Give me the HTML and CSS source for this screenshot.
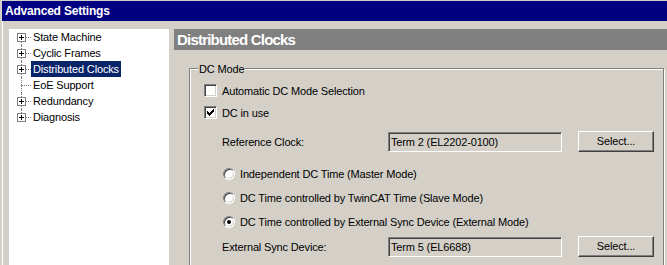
FILE: index.html
```html
<!DOCTYPE html>
<html lang="en">
<head>
  <meta charset="UTF-8" />
  <title>Advanced Settings</title>
  <link rel="stylesheet" href="styles.css">
</head>
<body>
  <div class="window">
    <div class="titlebar">Advanced Settings</div>
    <div class="main">
      <!-- Settings tree -->
      <ul class="tree">
        <li><span class="expander"></span><span class="hline"></span><span class="label">State Machine</span></li>
        <li><span class="expander"></span><span class="hline"></span><span class="label">Cyclic Frames</span></li>
        <li><span class="expander"></span><span class="hline"></span><span class="label selected">Distributed Clocks</span></li>
        <li><span class="hline long"></span><span class="label">EoE Support</span></li>
        <li><span class="expander"></span><span class="hline"></span><span class="label">Redundancy</span></li>
        <li><span class="expander"></span><span class="hline"></span><span class="label">Diagnosis</span></li>
      </ul>

      <!-- Page content -->
      <div class="pane">
        <div class="pane-header">Distributed Clocks</div>
        <div class="groupbox">
          <span class="group-title">DC Mode</span>

          <div class="check-row">
            <span class="checkbox"></span>
            <span>Automatic DC Mode Selection</span>
          </div>
          <div class="check-row second">
            <span class="checkbox">
              <svg width="7" height="7" viewBox="0 0 7 7" shape-rendering="crispEdges">
                <rect x="0" y="2" width="1" height="3" />
                <rect x="1" y="3" width="1" height="3" />
                <rect x="2" y="4" width="1" height="3" />
                <rect x="3" y="3" width="1" height="3" />
                <rect x="4" y="2" width="1" height="3" />
                <rect x="5" y="1" width="1" height="3" />
                <rect x="6" y="0" width="1" height="3" />
              </svg>
            </span>
            <span>DC in use</span>
          </div>

          <div class="field-row ref">
            <span class="field-label">Reference Clock:</span>
            <span class="textbox">Term 2 (EL2202-0100)</span>
            <span class="button">Select...</span>
          </div>

          <div class="radio-row first">
            <span class="radio"></span>
            <span>Independent DC Time (Master Mode)</span>
          </div>
          <div class="radio-row">
            <span class="radio"></span>
            <span>DC Time controlled by TwinCAT Time (Slave Mode)</span>
          </div>
          <div class="radio-row">
            <span class="radio checked"></span>
            <span>DC Time controlled by External Sync Device (External Mode)</span>
          </div>

          <div class="field-row ext">
            <span class="field-label">External Sync Device:</span>
            <span class="textbox">Term 5 (EL6688)</span>
            <span class="button">Select...</span>
          </div>
        </div>
      </div>
    </div>
  </div>
</body>
</html>
```

FILE: styles.css
```css
/* Base */
* {
  box-sizing: border-box;
}
body {
  margin: 0;
  height: 265px;
  overflow: hidden;
  background: #d4d0c8;
  font-family: 'Liberation Sans', Arial, sans-serif;
  font-size: 11px;
  letter-spacing: -0.15px;
  color: #000;
}
.window {
  margin-left: 2px;
  padding-top: 1px;
  height: 100%;
}
/* Title bar */
.titlebar {
  height: 20px;
  line-height: 20px;
  padding-left: 3px;
  background: #000080;
  color: #fff;
  font-weight: bold;
  font-size: 12px;
  letter-spacing: -0.2px;
}
.main {
  display: flex;
  gap: 5px;
  height: 244px;
  padding: 8px 0 0 6px;
  border-left: 1px solid #fff;
}
/* Tree */
.tree {
  list-style: none;
  margin: 0;
  padding: 0;
  width: 160px;
  background: #fff;
}
.tree li {
  position: relative;
  display: flex;
  align-items: center;
  height: 16px;
  padding-left: 8px;
}
.tree li::before {
  content: '';
  position: absolute;
  left: 12px;
  top: 0;
  bottom: 0;
  border-left: 1px dotted #808080;
}
.tree li:first-child::before {
  top: 8px;
}
.tree li:last-child::before {
  bottom: 8px;
}
.expander {
  position: relative;
  z-index: 1;
  width: 9px;
  height: 9px;
  border: 1px solid #808080;
  background: #fff;
}
.expander::before {
  content: '';
  position: absolute;
  left: 1px;
  top: 3px;
  width: 5px;
  height: 1px;
  background: #000;
}
.expander::after {
  content: '';
  position: absolute;
  left: 3px;
  top: 1px;
  width: 1px;
  height: 5px;
  background: #000;
}
.hline {
  width: 5px;
  border-top: 1px dotted #808080;
}
.hline.long {
  width: 10px;
  margin-left: 4px;
}
.label {
  height: 16px;
  line-height: 16px;
  padding: 0 2px;
}
.label.selected {
  background: #0a246a;
  color: #fff;
}
/* Right pane */
.pane {
  flex: 1;
}
.pane-header {
  height: 21px;
  line-height: 21px;
  padding-left: 3px;
  background: #808080;
  color: #fff;
  font-family: 'Liberation Sans Narrow', 'Arial Narrow', 'Liberation Sans', sans-serif;
  font-weight: bold;
  font-size: 15px;
  letter-spacing: -0.8px;
}
.groupbox {
  position: relative;
  height: 198px;
  margin: 18px 3px 0 15px;
  padding: 15px 0 0 14px;
  border: 1px solid #808080;
  box-shadow: inset 1px 1px #fff, 1px 1px #fff;
}
.group-title {
  position: absolute;
  top: -6px;
  left: 8px;
  padding: 0 1px;
  line-height: 13px;
  background: #d4d0c8;
}
/* Check boxes and radios */
.check-row,
.radio-row {
  display: flex;
  align-items: center;
  gap: 5px;
  height: 13px;
}
.check-row.second {
  margin-top: 9px;
}
.checkbox {
  display: flex;
  align-items: center;
  justify-content: center;
  width: 13px;
  height: 13px;
  background: #fff;
  border: 1px solid;
  border-color: #808080 #fff #fff #808080;
  box-shadow: inset 1px 1px #404040, inset -1px -1px #d4d0c8;
}
.radio-row {
  margin-left: 19px;
  margin-top: 11px;
}
.radio-row.first {
  margin-top: 15px;
}
.radio {
  position: relative;
  width: 12px;
  height: 12px;
  border-radius: 50%;
  background: #fff;
  border: 1px solid;
  border-color: #808080 #fff #fff #808080;
  box-shadow: inset 1px 1px #404040, inset -1px -1px #d4d0c8;
}
.radio.checked::after {
  content: '';
  position: absolute;
  left: 3px;
  top: 3px;
  width: 4px;
  height: 4px;
  border-radius: 50%;
  background: #000;
}
/* Field rows */
.field-row {
  display: flex;
  align-items: center;
  height: 21px;
  margin-left: 18px;
}
.field-row.ref {
  margin-top: 12px;
}
.field-row.ext {
  margin-top: 8px;
}
.field-label {
  width: 166px;
}
.textbox {
  width: 174px;
  height: 20px;
  line-height: 18px;
  padding-left: 2px;
  border: 1px solid;
  border-color: #808080 #fff #fff #808080;
  box-shadow: inset 1px 1px #404040, inset -1px -1px #d4d0c8;
}
.button {
  width: 76px;
  height: 21px;
  margin-left: 16px;
  line-height: 19px;
  text-align: center;
  border: 1px solid;
  border-color: #fff #404040 #404040 #fff;
  box-shadow: inset -1px -1px #808080;
}
```
